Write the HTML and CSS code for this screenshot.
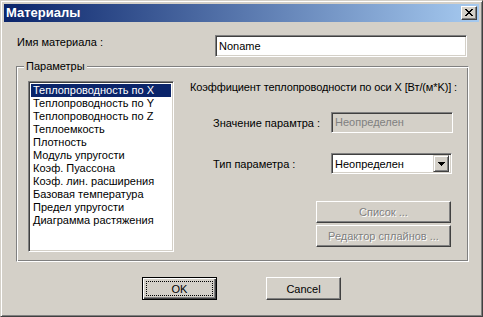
FILE: index.html
```html
<!DOCTYPE html>
<html>
<head>
<meta charset="utf-8">
<link rel="stylesheet" href="styles.css">
</head>
<body>
<div class="window">
  <div class="titlebar">
    <span class="title">Материалы</span>
    <span class="close">
      <svg width="8" height="7" viewBox="0 0 8 7" shape-rendering="crispEdges"><path d="M0 0h2v1h-2zM6 0h2v1h-2zM1 1h2v1h-2zM5 1h2v1h-2zM2 2h4v1h-4zM3 3h2v1h-2zM2 4h4v1h-4zM1 5h2v1h-2zM5 5h2v1h-2zM0 6h2v1h-2zM6 6h2v1h-2z" fill="#000"/></svg>
    </span>
  </div>
  <div class="body">
    <div class="name-row">
      <span class="name-label">Имя материала :</span>
      <div class="edit name-edit">Noname</div>
    </div>
    <div class="group">
      <span class="group-title">Параметры</span>
      <ul class="list">
        <li class="selected">Теплопроводность по X</li>
        <li>Теплопроводность по Y</li>
        <li>Теплопроводность по Z</li>
        <li>Теплоемкость</li>
        <li>Плотность</li>
        <li>Модуль упругости</li>
        <li>Коэф. Пуассона</li>
        <li>Коэф. лин. расширения</li>
        <li>Базовая температура</li>
        <li>Предел упругости</li>
        <li>Диаграмма растяжения</li>
      </ul>
      <div class="right">
        <div class="coef">Коэффициент теплопроводности по оси X [Вт/(м*K)] :</div>
        <div class="field field-value">
          <span class="field-label">Значение парамтра :</span>
          <div class="edit disabled-edit">Неопределен</div>
        </div>
        <div class="field field-type">
          <span class="field-label">Тип параметра :</span>
          <div class="combo">
            <span class="combo-text">Неопределен</span>
            <span class="drop"><svg width="7" height="4" viewBox="0 0 7 4" shape-rendering="crispEdges"><path d="M0 0h7v1h-7zM1 1h5v1h-5zM2 2h3v1h-3zM3 3h1v1h-1z" fill="#000"/></svg></span>
          </div>
        </div>
        <div class="side-btns">
          <div class="btn wide disabled">Список ...</div>
          <div class="btn wide disabled">Редактор сплайнов ...</div>
        </div>
      </div>
    </div>
    <div class="actions">
      <div class="btn default"><span class="focus">OK</span></div>
      <div class="btn">Cancel</div>
    </div>
  </div>
</div>
</body>
</html>
```
FILE: styles.css
```css
* { box-sizing: border-box; }
html, body { margin: 0; padding: 0; background: #D4D0C8; }
body {
  font-family: "Liberation Sans", Arial, sans-serif;
  font-size: 11px;
  color: #000;
}
.window {
  width: 483px;
  height: 317px;
  background: #D4D0C8;
  border: 1px solid;
  border-color: #D4D0C8 #404040 #404040 #D4D0C8;
  box-shadow: inset 1px 1px 0 #fff, inset -1px -1px 0 #808080;
  padding: 3px;
  display: flex;
  flex-direction: column;
}
.titlebar {
  height: 18px;
  background: linear-gradient(to right, #0A246A, #A6CAF0);
  display: flex;
  align-items: center;
  justify-content: space-between;
  padding: 0 2px 0 2px;
}
.title {
  color: #fff;
  font-weight: bold;
  font-family: "Liberation Sans", Arial, sans-serif;
  font-size: 13px;
  line-height: 16px;
}
.close {
  width: 16px;
  height: 14px;
  background: #D4D0C8;
  border: 1px solid;
  border-color: #fff #404040 #404040 #fff;
  box-shadow: inset -1px -1px 0 #808080;
  display: flex;
  align-items: center;
  justify-content: center;
  padding: 0 1px 1px 0;
}
.close svg { display: block; }
.body {
  flex: 1;
  display: flex;
  flex-direction: column;
}
.name-row {
  display: flex;
  margin-top: 13px;
  padding-left: 13px;
}
.name-label {
  width: 198px;
  padding-top: 1px;
}
.edit {
  height: 22px;
  border: 1px solid;
  border-color: #808080 #fff #fff #808080;
  box-shadow: inset 1px 1px 0 #404040, inset -1px -1px 0 #D4D0C8;
  background: #fff;
  padding: 4px 0 0 3px;
  line-height: 13px;
}
.name-edit { width: 252px; }
.group {
  position: relative;
  margin: 9px 0 0 12px;
  width: 453px;
  height: 196px;
  border: 1px solid #808080;
  border-right-color: #fff;
  border-bottom-color: #fff;
  box-shadow: inset 1px 1px 0 #fff, inset -1px -1px 0 #808080;
  display: flex;
  padding: 14px 0 0 11px;
}
.group-title {
  position: absolute;
  top: -7px;
  left: 7px;
  padding: 0 2px;
  background: #D4D0C8;
  line-height: 13px;
}
.list {
  list-style: none;
  margin: 0;
  width: 146px;
  height: 171px;
  background: #fff;
  border: 1px solid;
  border-color: #808080 #fff #fff #808080;
  box-shadow: inset 1px 1px 0 #404040, inset -1px -1px 0 #D4D0C8;
  padding: 2px;
}
.list li {
  line-height: 13px;
  height: 13px;
  padding-left: 2px;
  white-space: nowrap;
}
.list li.selected {
  background: #0A246A;
  color: #fff;
}
.right {
  margin-left: 16px;
  display: flex;
  flex-direction: column;
  flex: 1;
}
.coef {
  line-height: 13px;
  white-space: nowrap;
  letter-spacing: -0.12px;
}
.field {
  display: flex;
  align-items: center;
  padding-left: 23px;
}
.field-label { width: 118px; }
.field-value { margin-top: 18px; }
.field-type { margin-top: 20px; }
.disabled-edit {
  width: 122px;
  height: 21px;
  background: #D4D0C8;
  color: #808080;
  padding-top: 3px;
}
.combo {
  width: 121px;
  height: 21px;
  background: #fff;
  border: 1px solid;
  border-color: #808080 #fff #fff #808080;
  box-shadow: inset 1px 1px 0 #404040, inset -1px -1px 0 #D4D0C8;
  display: flex;
  align-items: center;
  justify-content: space-between;
  padding: 2px;
}
.combo-text { padding-left: 1px; }
.drop {
  width: 16px;
  height: 17px;
  background: #D4D0C8;
  border: 1px solid;
  border-color: #D4D0C8 #404040 #404040 #D4D0C8;
  box-shadow: inset 1px 1px 0 #fff, inset -1px -1px 0 #808080;
  display: flex;
  align-items: center;
  justify-content: center;
}
.drop svg { display: block; }
.side-btns {
  margin: 27px 0 0 126px;
  display: flex;
  flex-direction: column;
  gap: 2px;
}
.btn {
  width: 75px;
  height: 23px;
  background: #D4D0C8;
  border: 1px solid;
  border-color: #fff #404040 #404040 #fff;
  box-shadow: inset -1px -1px 0 #808080;
  display: flex;
  align-items: center;
  justify-content: center;
}
.btn.wide { width: 135px; height: 22px; }
.btn.disabled {
  color: #808080;
  text-shadow: 1px 1px 0 #fff;
}
.btn.default {
  border: 1px solid #000;
  box-shadow: inset 1px 1px 0 #fff, inset -1px -1px 0 #404040, inset -2px -2px 0 #808080;
  padding: 3px;
}
.focus {
  display: flex;
  align-items: center;
  justify-content: center;
  width: 100%;
  height: 100%;
  border: 1px dotted #000;
}
.actions {
  display: flex;
  justify-content: center;
  gap: 49px;
  margin-top: 15px;
}
```
